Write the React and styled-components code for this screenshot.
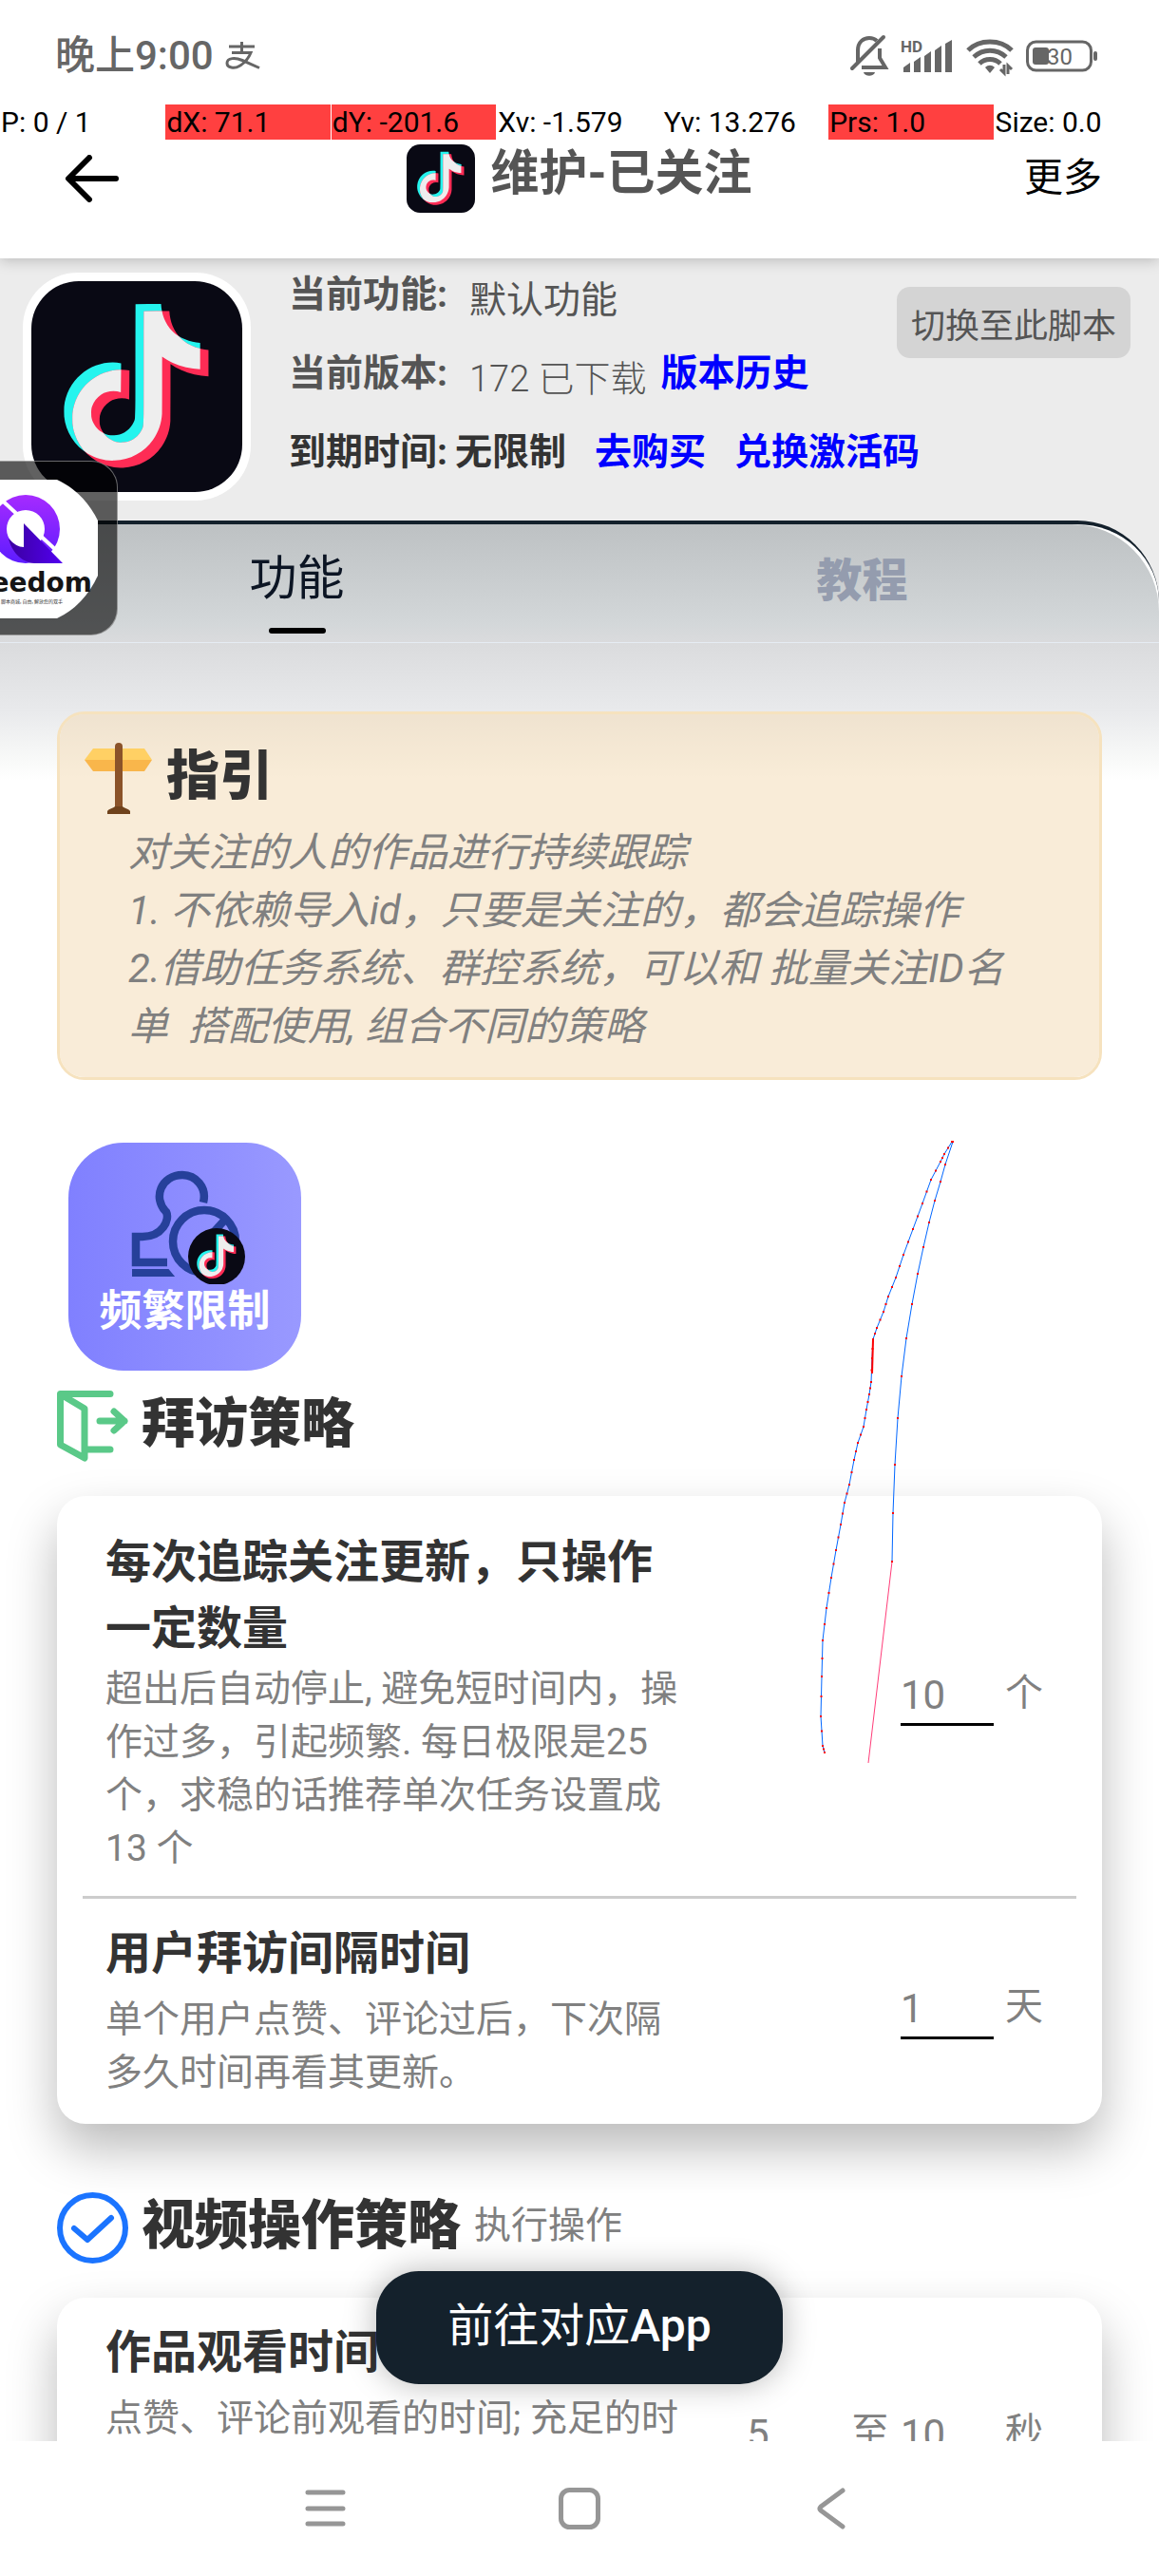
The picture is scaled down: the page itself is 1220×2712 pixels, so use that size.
import React, { useId } from "react";
import styled, { createGlobalStyle } from "styled-components";

const ink = "#14212c";
const sans = `Roboto, "Noto Sans CJK SC", sans-serif`;

const GlobalStyle = createGlobalStyle`
  *, *::before, *::after { box-sizing: border-box; }
  body { margin: 0; background: #fff; font-family: ${sans}; }
  button, input { font-family: inherit; margin: 0; }
  h1, h2, h3, p { margin: 0; }
`;

const Screen = styled.div`
  position: relative;
  display: flex;
  flex-direction: column;
  height: 100vh;
  overflow: hidden;
  background: #fff;
  color: #333;
`;

/* ---------- status bar ---------- */
const StatusBar = styled.div`
  display: flex;
  justify-content: space-between;
  align-items: center;
  height: 110px;
  padding: 8px 64px 0 58px;
  color: #666;
`;

const StatusGroup = styled.div`
  display: flex;
  align-items: center;
  gap: ${(p) => p.$gap}px;

  svg { overflow: visible; }
`;

const Clock = styled.span`
  font-size: 42px;
  font-weight: 500;
  line-height: 48px;
`;

const PointerBar = styled.div`
  display: grid;
  grid-template-columns: repeat(7, 1fr);
  column-gap: 1px;
  height: 37px;
`;

const PointerCell = styled.span`
  padding-left: 1px;
  background: ${(p) => (p.$hot ? "#ff4040" : "transparent")};
  color: #000;
  font-size: 30px;
  line-height: 37px;
  white-space: nowrap;
`;

/* ---------- header ---------- */
const Header = styled.header`
  position: relative;
  z-index: 1;
  display: grid;
  grid-template-columns: 1fr auto 1fr;
  align-items: start;
  height: 125px;
  padding: 5px 60px 0;
  background: #fff;
  box-shadow: 0 2px 14px rgba(0, 0, 0, 0.22);
  clip-path: inset(0 0 -20px 0);
`;

const PlainButton = styled.button`
  display: flex;
  align-items: center;
  height: ${(p) => p.$h || 72}px;
  padding: 0;
  border: 0;
  background: none;
  color: #000;
  font-size: 41px;
  justify-self: ${(p) => p.$side || "auto"};
`;

const TitleGroup = styled.div`
  display: flex;
  gap: 16px;
`;

const AppTitle = styled.h1`
  color: #555;
  font-size: 51px;
  font-weight: 700;
  line-height: 62px;
`;

/* ---------- script info ---------- */
const Content = styled.main`
  display: flex;
  flex: 1;
  flex-direction: column;
  min-height: 0;
  overflow: hidden;
  background: #ececec;
`;

const Info = styled.section`
  display: flex;
  flex-shrink: 0;
  align-items: flex-start;
  gap: 40px;
  padding: 15px 30px 21px 24px;
`;

const LogoFrame = styled.div`
  display: flex;
  padding: 9px;
  border-radius: 58px;
  background: #fff;
`;

const InfoRows = styled.div`
  display: flex;
  flex: 1;
  flex-direction: column;
  gap: 35px;
  min-width: 0;
`;

const InfoRow = styled.div`
  display: flex;
  height: 48px;
  color: ${(p) => (p.$strong ? "#333" : "#555")};
  font-size: 39px;
  line-height: 46px;
  white-space: nowrap;
`;

const InfoLabel = styled.span`
  font-weight: 700;
  margin-right: ${(p) => p.$after}px;
`;

const InfoValue = styled.span`
  font-size: ${(p) => (p.$light ? 38 : 39)}px;
  font-weight: ${(p) => (p.$light ? 300 : 400)};
  line-height: 58px;
`;

const InfoLink = styled.a`
  margin-left: ${(p) => p.$before}px;
  color: #00f;
  font-weight: 700;
  text-decoration: none;
`;

const SwitchButton = styled.button`
  flex-shrink: 0;
  height: 75px;
  margin-top: 15px;
  padding: 0 15px;
  border: 0;
  border-radius: 14px;
  background: #d4d4d4;
  color: #555;
  font-size: 36px;
  white-space: nowrap;
`;

/* ---------- tabs panel ---------- */
const Panel = styled.section`
  flex: 1;
  min-height: 0;
  border-top: 4px solid ${ink};
  border-top-right-radius: 86px;
  background: #fff;
`;

const PanelShade = styled.div`
  border-top-right-radius: 92px;
  background: linear-gradient(#bdc1c3 0, #d3d7d9 104px, #dadbdd 124px, #e9eaec 198px, #f9faf9 250px, #fff 270px);
`;

const Tabs = styled.div`
  display: grid;
  grid-template-columns: 1fr 1fr;
  height: 125px;
  padding: 0 15px;
  border-bottom: 1px solid #e6ecf3;
`;

const Tab = styled.button`
  display: flex;
  flex-direction: column;
  align-items: center;
  gap: ${(p) => (p.$active ? 17 : 11)}px;
  padding: 22px 0 0;
  border: 0;
  background: none;
  color: ${(p) => (p.$active ? "#0c1524" : "#949cae")};
  font-size: ${(p) => (p.$active ? 50 : 48)}px;
  font-weight: ${(p) => (p.$active ? 400 : 900)};
  line-height: ${(p) => (p.$active ? 70 : 76)}px;

  &::after {
    content: "";
    width: 60px;
    height: 6px;
    border-radius: 3px;
    background: ${(p) => (p.$active ? "#000" : "transparent")};
  }
`;

const Body = styled.div`
  display: flex;
  flex-direction: column;
  align-items: stretch;
  padding: 72px 60px 0;
`;

const Heading = styled.h2`
  color: #333;
  font-size: 56px;
  font-weight: 900;
  line-height: 70px;
`;

const HeadingRow = styled.div`
  display: flex;
  align-items: flex-start;
  gap: 14px;
  height: 75px;
`;

const HeadingNote = styled.span`
  color: #808080;
  font-size: 39px;
  line-height: 70px;
`;

const GuideCard = styled.section`
  padding: 30px 71px 23px 26px;
  border: 3px solid #f6e2be;
  border-radius: 29px;
  background: rgba(244, 220, 184, 0.55);
  background-clip: padding-box;
`;

const GuideText = styled.p`
  margin: 10px 0 0 46px;
  color: #808080;
  font-size: 42px;
  font-style: italic;
  line-height: 61px;
  white-space: pre-wrap;
`;

const Shortcut = styled.button`
  display: flex;
  flex-direction: column;
  align-items: center;
  align-self: flex-start;
  width: 245px;
  height: 240px;
  margin: 66px 12px 21px;
  padding: 28px 0 0;
  border: 0;
  border-radius: 58px;
  background: linear-gradient(90deg, #8080ff, #9999ff);
  color: #fff;
  font-size: 45px;
  font-weight: 700;
  line-height: 58px;
`;

const Card = styled.section`
  margin: 36px 0 72px;
  padding: 0 27px;
  border-radius: 30px;
  background: #fff;
  box-shadow: 0 26px 52px rgba(0, 0, 0, 0.27);
`;

const SettingText = styled.div`
  align-self: flex-start;
  flex: 0 1 608px;
`;

const Setting = styled.div`
  display: flex;
  justify-content: space-between;
  align-items: center;
  min-height: ${(p) => p.$min || 0}px;
  padding: ${(p) => (p.$first ? "23px 35px 22px 24px" : "23px 35px 26px 24px")};

  ${SettingText} {
    padding-top: ${(p) => (p.$first ? 12 : 0)}px;
  }

  & + & {
    border-top: 3px solid #ccc;
  }
`;

const SettingTitle = styled.h3`
  min-height: 76px;
  color: #333;
  font-size: 48px;
  font-weight: 700;
  line-height: 70px;
`;

const SettingNote = styled.p`
  color: #808080;
  font-size: 39px;
  line-height: 56px;
`;

const Fields = styled.div`
  display: flex;
  gap: 12px;
`;

const Field = styled.label`
  display: flex;
  gap: 12px;
  color: #808080;
  font-size: 40px;
  line-height: 56px;
`;

const FieldInput = styled.input`
  width: 98px;
  height: 62px;
  padding: 0;
  border: 0;
  border-bottom: 3px solid #000;
  background: none;
  color: #808080;
  font-size: 42px;
`;

/* ---------- floating parts ---------- */
const Stage = styled.div`
  position: relative;
  display: flex;
  flex: 1;
  flex-direction: column;
  min-height: 0;
`;

const OpenAppButton = styled.button`
  position: absolute;
  bottom: 60px;
  left: 50%;
  width: 428px;
  height: 119px;
  margin-left: -214px;
  padding: 0 0 14px;
  border: 0;
  border-radius: 45px;
  background: ${ink};
  box-shadow: 0 0 34px rgba(0, 0, 0, 0.28);
  color: #fff;
  font-size: 48px;
  font-weight: 400;

  b { font-weight: 500; }
`;

const FloatingBubble = styled.div`
  position: absolute;
  top: 485px;
  left: -60px;
  width: 184px;
  height: 184px;
  border: 1px solid rgba(255, 255, 255, 0.4);
  border-radius: 28px;
  background: rgba(0, 0, 0, 0.62);
  overflow: hidden;
`;

const TouchTrail = styled.svg`
  position: absolute;
  top: 0;
  left: 0;
  width: 100%;
  height: 100%;
  pointer-events: none;
`;

const NavBar = styled.nav`
  display: flex;
  justify-content: center;
  height: 142px;
  padding-top: 44px;
  gap: 213px;
  background: #fff;
`;

/* ---------- drawings ---------- */
const NOTE =
  "M12.525.02c1.31-.02 2.61-.01 3.91-.02.08 1.53.63 3.09 1.75 4.17 1.12 1.11 2.7 1.62 4.24 1.79v4.03c-1.44-.05-2.89-.35-4.2-.97-.57-.26-1.1-.59-1.62-.93-.01 2.92.01 5.84-.02 8.75-.08 1.4-.54 2.79-1.35 3.94-1.31 1.92-3.58 3.17-5.91 3.21-1.43.08-2.86-.31-4.08-1.03-2.02-1.19-3.44-3.37-3.65-5.71-.02-.5-.03-1-.01-1.49.18-1.9 1.12-3.72 2.58-4.96 1.66-1.44 3.98-2.13 6.15-1.72.02 1.48-.04 2.96-.04 4.44-.99-.32-2.15-.23-3.02.37-.63.41-1.11 1.04-1.36 1.75-.21.51-.15 1.07-.14 1.61.24 1.64 1.82 3.02 3.5 2.87 1.12-.01 2.19-.66 2.77-1.61.19-.33.4-.67.41-1.06.1-1.79.06-3.57.07-5.36.01-4.03-.01-8.05.02-12.07z";

function MusicLogo({ size, radius, x, y }) {
  const id = useId();
  const back = "translate(23.6 24) scale(6.87)";
  const front = "translate(32.4 31.6) scale(6.87)";
  return (
    <svg x={x} y={y} width={size} height={size} viewBox="0 0 222 222">
      <clipPath id={id}>
        <path d={NOTE} transform={back} />
      </clipPath>
      <rect width="222" height="222" rx={radius} fill="#090914" />
      <path d={NOTE} transform={back} fill="#25f4ee" />
      <path d={NOTE} transform={front} fill="#fe2c55" />
      <g clipPath={`url(#${id})`}>
        <path d={NOTE} transform={front} fill="#eeeeee" />
      </g>
    </svg>
  );
}

const PayGlyph = () => (
  <svg width="38" height="30" viewBox="0 0 38 30" fill="none" stroke="#666" strokeWidth="3">
    <path d="M5 5h27M18.500 0v12M8 11.500h20c-2 5-7 11-12 14-5 3-13 2-13-3 0-6 9-6 16-3l18 8" />
  </svg>
);

const BellOff = () => (
  <svg width="40" height="44" viewBox="0 0 40 44" fill="none" stroke="#666" strokeWidth="4">
    <path d="M8 30V16C8 7 14 3 20 3c3 0 6 1 8 3M31 14v10l6 10H12" />
    <path d="M2 35L35 2" strokeLinecap="round" />
    <path d="M14 39h12c-1 5-11 5-12 0z" fill="#666" stroke="none" />
  </svg>
);

const Signal = () => (
  <svg width="56" height="36" viewBox="0 0 56 36" fill="#666">
    <text x="0" y="14" fontFamily="Roboto, sans-serif" fontSize="17" fontWeight="700">HD</text>
    <path d="M3 30l7-5v10h-7zM14 24l7-5v16h-7zM25 18l7-5v22h-7zM36 12l7-5v28h-7zM47 5l7-4v34h-7z" />
  </svg>
);

const Wifi = () => (
  <svg width="50" height="38" viewBox="0 0 50 38" fill="none" stroke="#666" strokeWidth="5">
    <path d="M2 13C14 1 36 1 48 13M8 20c10-9 24-9 34 0M14 27c6-6 16-6 22 0" />
    <path d="M20 31c3-3 7-3 10 0l-5 6z" fill="#666" stroke="none" />
    <path d="M36 33l4 4v-9M44 38v-9l4 4" strokeWidth="3" />
  </svg>
);

const Battery = () => (
  <svg width="76" height="34" viewBox="0 0 76 34">
    <rect x="1.5" y="2" width="67" height="30" rx="9" fill="none" stroke="#666" strokeWidth="3" />
    <rect x="7" y="8" width="17" height="18" rx="3" fill="#666" />
    <rect x="71" y="12" width="4" height="10" rx="2" fill="#666" />
    <text x="22" y="26" fontFamily="Roboto, sans-serif" fontSize="24" fill="#666">30</text>
  </svg>
);

const BackArrow = () => (
  <svg width="76" height="50" viewBox="0 0 76 50" fill="none" stroke="#000" strokeWidth="6" strokeLinecap="round" strokeLinejoin="round">
    <path d="M62 25H13M34 3L12 25l22 22" />
  </svg>
);

const Signpost = () => (
  <svg width="72" height="75" viewBox="0 0 72 75">
    <path d="M9 6h54l8 12H0z" fill="#ffd064" />
    <path d="M0 18h71l-8 12H9z" fill="#f9b64b" />
    <path d="M32 4a4 4 0 0 1 8 0v66h-8z" fill="#8b5329" />
    <path d="M24 75v-3c2-3 6-3 8-5h8c2 2 6 2 8 5v3z" fill="#6f421c" />
  </svg>
);

const DoorExit = () => (
  <svg width="75" height="75" viewBox="0 0 75 75" fill="none" stroke="#5ac988" strokeWidth="7" strokeLinecap="round" strokeLinejoin="round">
    <path d="M56 3.5H3.500V57L29 71V19L4 4M32 62h24M45 32h26M60 22l11 10-11 10" />
  </svg>
);

const CheckRing = () => (
  <svg width="75" height="75" viewBox="0 0 75 75" fill="none" stroke="#1b74ff" strokeLinecap="round" strokeLinejoin="round">
    <circle cx="37.500" cy="37.500" r="34.500" strokeWidth="6" />
    <path d="M18 38l14 12 25-23" strokeWidth="6" />
  </svg>
);

const StampIcon = () => (
  <svg width="126" height="121" viewBox="0 0 126 121">
    <g fill="none" stroke="#26409a" strokeWidth="8.500">
      <path d="M82 35c4-16-8-29-22-29-22 0-32 24-17 39 4 8-4 26-25 26H11v27h33" />
      <path d="M8 106h37l5 6H8z" fill="#26409a" strokeWidth="2" />
      <circle cx="83" cy="76" r="33" />
      <path d="M84 76l20-22" />
    </g>
    <MusicLogo x="66" y="62" size={60} radius={111} />
  </svg>
);

const FreedomLogo = () => (
  <svg width="182" height="182" viewBox="-59 486 182 182">
    <defs>
      <linearGradient id="ring" x1="0" y1="0" x2="0" y2="1">
        <stop offset="0" stopColor="#a62bff" />
        <stop offset="1" stopColor="#5d1cff" />
      </linearGradient>
      <linearGradient id="blade" x1="0" y1="0" x2="1" y2="0">
        <stop offset="0" stopColor="#3b00a0" />
        <stop offset="1" stopColor="#5200f0" />
      </linearGradient>
    </defs>
    <path d="M-16 505H60Q88 518 103 548V606Q88 638 60 651H-16z" fill="#fff" />
    <path fillRule="evenodd" fill="url(#ring)" d="M27 521a36 36 0 1 1 0 72 36 36 0 1 1 0-72zM27 537a20 20 0 1 0 0 40 20 20 0 1 0 0-40z" />
    <path d="M-4 521L62 582" stroke="#fff" strokeWidth="4" />
    <path d="M25 551l41 42H36C22 592 12 580 9 567q8 9 16 9z" fill="url(#blade)" />
    <text x="97" y="623" textAnchor="end" fontFamily="DejaVu Sans, sans-serif" fontSize="28" fontWeight="700" fill="#151515">freedom</text>
    <text x="66" y="635" textAnchor="end" fontFamily="Noto Sans CJK SC, sans-serif" fontSize="5" fill="#333">脚本商城, 自由, 解放您的双手</text>
  </svg>
);

/* ---------- touch trail data ---------- */
const upStroke = [
  [868, 1845], [866, 1838], [864, 1807], [865, 1765], [866, 1727], [870, 1693], [875, 1661], [880, 1632],
  [885, 1605], [889, 1582], [894, 1563], [899, 1537], [903, 1519], [909, 1502], [912, 1484], [915, 1468],
  [917, 1455], [918, 1430], [919, 1410], [923, 1398], [930, 1381], [935, 1365], [943, 1345], [951, 1321],
  [961, 1294], [971, 1267], [980, 1242], [990, 1223], [994, 1215], [1002, 1202],
];
const downStroke = [
  [1003, 1202], [995, 1226], [990, 1244], [984, 1264], [978, 1287], [972, 1313], [966, 1341], [960, 1373],
  [954, 1409], [949, 1449], [945, 1493], [942, 1542], [940, 1593], [939, 1644],
];
const midpoints = upStroke.slice(1).map(([x, y], i) => [(x + upStroke[i][0]) / 2, (y + upStroke[i][1]) / 2]);

const readings = [
  ["P: 0 / 1", false],
  ["dX: 71.1", true],
  ["dY: -201.6", true],
  ["Xv: -1.579", false],
  ["Yv: 13.276", false],
  ["Prs: 1.0", true],
  ["Size: 0.0", false],
];

function NumberField({ value, unit, name }) {
  return (
    <Field>
      <FieldInput type="text" inputMode="numeric" defaultValue={value} aria-label={name} />
      {unit}
    </Field>
  );
}

export default function App() {
  return (
    <Screen>
      <GlobalStyle />
      <StatusBar>
        <StatusGroup $gap={11}>
          <Clock>晚上9:00</Clock>
          <PayGlyph />
        </StatusGroup>
        <StatusGroup $gap={13}>
          <BellOff />
          <Signal />
          <Wifi />
          <Battery />
        </StatusGroup>
      </StatusBar>
      <PointerBar>
        {readings.map(([text, hot]) => (
          <PointerCell key={text} $hot={hot}>{text}</PointerCell>
        ))}
      </PointerBar>
      <Header>
        <PlainButton aria-label="返回"><BackArrow /></PlainButton>
        <TitleGroup>
          <MusicLogo size={72} radius={44} />
          <AppTitle>维护-已关注</AppTitle>
        </TitleGroup>
        <PlainButton $side="end" $h={62}>更多</PlainButton>
      </Header>

      <Stage>
        <Content>
          <Info>
            <LogoFrame><MusicLogo size={222} radius={50} /></LogoFrame>
            <InfoRows>
              <InfoRow>
                <InfoLabel $after={23}>当前功能:</InfoLabel>
                <InfoValue>默认功能</InfoValue>
              </InfoRow>
              <InfoRow>
                <InfoLabel $after={23}>当前版本:</InfoLabel>
                <InfoValue $light>172 已下载</InfoValue>
                <InfoLink href="#history" $before={15}>版本历史</InfoLink>
              </InfoRow>
              <InfoRow $strong>
                <InfoLabel $after={8}>到期时间:</InfoLabel>
                <InfoLabel $after={0}>无限制</InfoLabel>
                <InfoLink href="#buy" $before={30}>去购买</InfoLink>
                <InfoLink href="#redeem" $before={30}>兑换激活码</InfoLink>
              </InfoRow>
            </InfoRows>
            <SwitchButton>切换至此脚本</SwitchButton>
          </Info>

          <Panel>
            <PanelShade>
              <Tabs>
                <Tab $active>功能</Tab>
                <Tab>教程</Tab>
              </Tabs>
              <Body>
                <GuideCard>
                  <HeadingRow>
                    <Signpost />
                    <Heading>指引</Heading>
                  </HeadingRow>
                  <GuideText>
                    {"对关注的人的作品进行持续跟踪\n1. 不依赖导入id，只要是关注的，都会追踪操作\n2.借助任务系统、群控系统，可以和 批量关注ID名单  搭配使用, 组合不同的策略"}
                  </GuideText>
                </GuideCard>

                <Shortcut>
                  <StampIcon />
                  频繁限制
                </Shortcut>

                <HeadingRow>
                  <DoorExit />
                  <Heading>拜访策略</Heading>
                </HeadingRow>
                <Card>
                  <Setting $first>
                    <SettingText>
                      <SettingTitle>每次追踪关注更新，只操作一定数量</SettingTitle>
                      <SettingNote>超出后自动停止, 避免短时间内，操作过多，引起频繁. 每日极限是25个，求稳的话推荐单次任务设置成13 个</SettingNote>
                    </SettingText>
                    <NumberField value="10" unit="个" name="数量" />
                  </Setting>
                  <Setting>
                    <SettingText>
                      <SettingTitle>用户拜访间隔时间</SettingTitle>
                      <SettingNote>单个用户点赞、评论过后，下次隔多久时间再看其更新。</SettingNote>
                    </SettingText>
                    <NumberField value="1" unit="天" name="间隔" />
                  </Setting>
                </Card>

                <HeadingRow>
                  <CheckRing />
                  <Heading>视频操作策略</Heading>
                  <HeadingNote>执行操作</HeadingNote>
                </HeadingRow>
                <Card>
                  <Setting $min={293}>
                    <SettingText>
                      <SettingTitle>作品观看时间</SettingTitle>
                      <SettingNote>点赞、评论前观看的时间; 充足的时</SettingNote>
                    </SettingText>
                    <Fields>
                      <NumberField value="5" unit="至" name="最短" />
                      <NumberField value="10" unit="秒" name="最长" />
                    </Fields>
                  </Setting>
                </Card>
              </Body>
            </PanelShade>
          </Panel>
        </Content>
        <OpenAppButton>前往对应<b>App</b></OpenAppButton>
      </Stage>

      <NavBar>
        <PlainButton $h={54} aria-label="菜单">
          <svg width="54" height="44" viewBox="0 0 54 44" stroke="#969696" strokeWidth="5" strokeLinecap="round">
            <path d="M8 5h37M8 22h37M8 38h37" />
          </svg>
        </PlainButton>
        <PlainButton $h={54} aria-label="主页">
          <svg width="54" height="44" viewBox="0 0 54 44" fill="none" stroke="#969696" strokeWidth="5">
            <rect x="7.500" y="2.500" width="39" height="39" rx="9" />
          </svg>
        </PlainButton>
        <PlainButton $h={54} aria-label="后退">
          <svg width="54" height="44" viewBox="0 0 54 44" fill="none" stroke="#969696" strokeWidth="5" strokeLinecap="round" strokeLinejoin="round">
            <path d="M37 3L14 20q-2 2 0 4l23 17" />
          </svg>
        </PlainButton>
      </NavBar>

      <FloatingBubble><FreedomLogo /></FloatingBubble>

      <TouchTrail fill="none" aria-hidden="true">
        <polyline points={upStroke.join(" ")} stroke="#0066ff" />
        <polyline points={downStroke.join(" ")} stroke="#0066ff" />
        <path d="M939 1644L914 1856" stroke="#ff3c78" />
        <path d="M919 1410L918 1446" stroke="#ff0000" strokeWidth="2" />
        {[...upStroke, ...midpoints, ...downStroke].map(([x, y]) => (
          <rect key={`${x}-${y}`} x={x - 1} y={y - 1} width="2" height="2" fill="#ff0000" />
        ))}
      </TouchTrail>
    </Screen>
  );
}
